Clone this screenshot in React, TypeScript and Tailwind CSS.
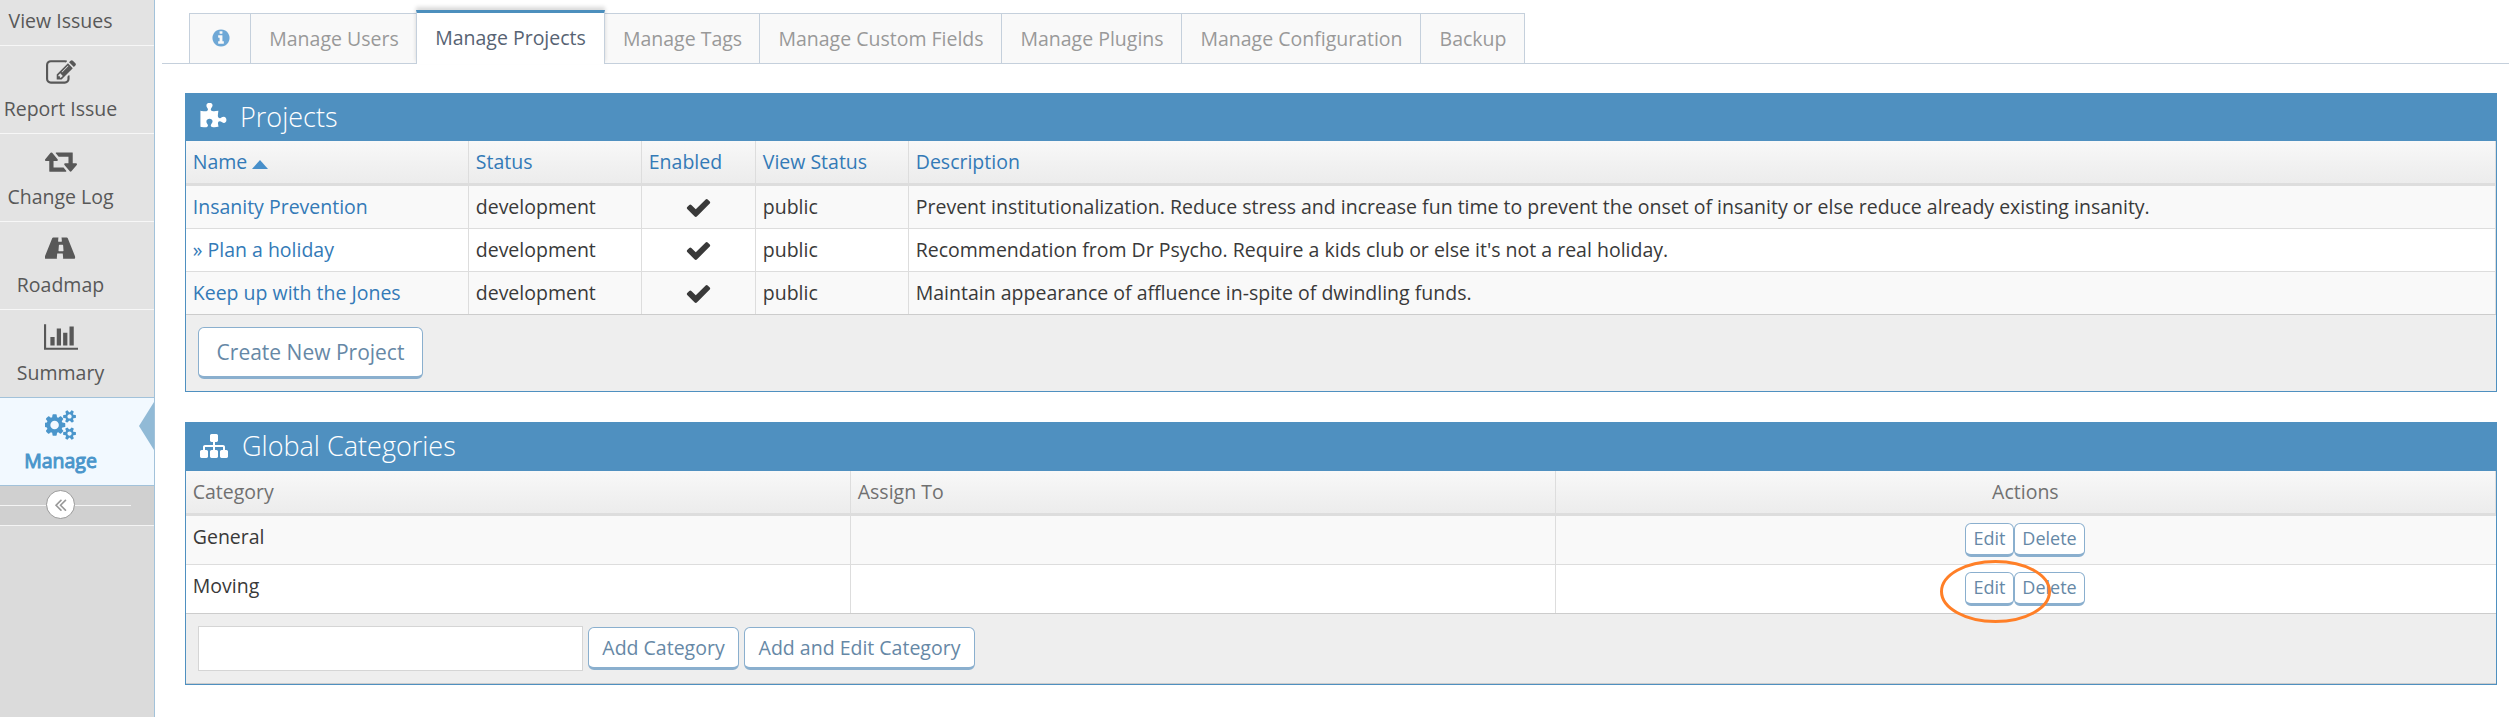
import type { ReactNode } from "react";

const icons = {
  edit: "M888 1184l116-116-152-152-116 116v56h96v96h56zm440-720q-16-16-33 1l-350 350q-17 17-1 33t33-1l350-350q17-17 1-33zm80 594v190q0 119-84.5 203.5t-203.5 84.5h-832q-119 0-203.5-84.5t-84.5-203.5v-832q0-119 84.5-203.5t203.5-84.5h832q63 0 117 25 15 7 18 23 3 17-9 29l-49 49q-14 14-32 8-23-6-45-6h-832q-66 0-113 47t-47 113v832q0 66 47 113t113 47h832q66 0 113-47t47-113v-126q0-13 9-22l64-64q15-15 35-7t20 29zm-96-738l288 288-672 672h-288v-288zm444 132l-92 92-288-288 92-92q28-28 68-28t68 28l152 152q28 28 28 68t-28 68z",
  retweet: "M1280 1504q0 13-9.5 22.5t-22.5 9.5h-960q-8 0-13.5-2t-9-7-5.5-8-3-11.5-1-11.5v-600h-192q-26 0-45-19t-19-45q0-24 15-41l320-384q19-22 49-22t49 22l320 384q15 17 15 41 0 26-19 45t-45 19h-192v384h576q16 0 25 11l160 192q7 10 7 21zm640-416q0 24-15 41l-320 384q-20 23-49 23t-49-23l-320-384q-15-17-15-41 0-26 19-45t45-19h192v-384h-576q-16 0-25-12l-160-192q-7-9-7-20 0-13 9.5-22.5t22.5-9.5h960q8 0 13.5 2t9 7 5.5 8 3 11.5 1 11.5v600h192q26 0 45 19t19 45z",
  road: "M1111 1001v-4l-24-320q-1-13-11-22.5t-23-9.5h-186q-13 0-23 9.5t-11 22.5l-24 320v4q-1 12 8 20t21 8h244q12 0 21-8t8-20zm698 407q0 73-46 73h-704q13 0 22-9.5t8-22.5l-20-256q-1-13-11-22.5t-23-9.5h-272q-13 0-23 9.5t-11 22.5l-20 256q-1 13 8 22.5t22 9.5h-704q-46 0-46-73 0-54 26-116l417-1044q8-19 26-33t38-14h339q-13 0-23 9.5t-11 22.5l-15 192q-1 14 8 23t22 9h166q13 0 22-9t8-23l-15-192q-1-13-11-22.5t-23-9.5h339q20 0 38 14t26 33l417 1044q26 62 26 116z",
  chart: "M640 896v512h-256v-512h256zm384-512v1024h-256v-1024h256zm1024 1152v128h-2048v-1536h128v1408h1920zm-640-896v768h-256v-768h256zm384-384v1152h-256v-1152h256z",
  cogs: "M832 896q0-106-75-181t-181-75-181 75-75 181 75 181 181 75 181-75 75-181zm768 512q0-52-38-90t-90-38-90 38-38 90q0 53 37.5 90.5t90.5 37.5 90.5-37.5 37.5-90.5zm0-1024q0-52-38-90t-90-38-90 38-38 90q0 53 37.5 90.5t90.5 37.5 90.5-37.5 37.5-90.5zm-384 421v185q0 10-7 19.5t-16 10.5l-155 24q-11 35-32 76 34 48 90 115 7 11 7 20 0 12-7 19-23 30-82.5 89.5t-78.5 59.5q-11 0-21-7l-115-90q-37 19-77 31-11 108-23 155-7 24-30 24h-186q-11 0-20-7.5t-10-17.5l-23-153q-34-10-75-31l-118 89q-7 7-20 7-11 0-21-8-144-133-144-160 0-9 7-19 10-14 41-53t47-61q-23-44-35-82l-152-24q-10-1-17-9.5t-7-19.5v-185q0-10 7-19.5t16-10.5l155-24q11-35 32-76-34-48-90-115-7-11-7-20 0-12 7-20 22-30 82-89t79-59q11 0 21 7l115 90q34-18 77-32 11-108 23-154 7-24 30-24h186q11 0 20 7.5t10 17.5l23 153q34 10 75 31l118-89q8-7 20-7 11 0 21 8 144 133 144 160 0 8-7 19-12 16-42 54t-45 60q23 48 34 82l152 23q10 2 17 10.5t7 19.5zm640 533v140q0 16-149 31-12 27-30 52 51 113 51 138 0 4-4 7-122 71-124 71-8 0-46-47t-52-68q-20 2-30 2t-30-2q-14 21-52 68t-46 47q-2 0-124-71-4-3-4-7 0-25 51-138-18-25-30-52-149-15-149-31v-140q0-16 149-31 13-29 30-52-51-113-51-138 0-4 4-7 4-2 35-20t59-34 30-16q8 0 46 46.5t52 67.5q20-2 30-2t30 2q51-71 92-112l6-2q4 0 124 70 4 3 4 7 0 25-51 138 17 23 30 52 149 15 149 31zm0-1024v140q0 16-149 31-12 27-30 52 51 113 51 138 0 4-4 7-122 71-124 71-8 0-46-47t-52-68q-20 2-30 2t-30-2q-14 21-52 68t-46 47q-2 0-124-71-4-3-4-7 0-25 51-138-18-25-30-52-149-15-149-31v-140q0-16 149-31 13-29 30-52-51-113-51-138 0-4 4-7 4-2 35-20t59-34 30-16q8 0 46 46.5t52 67.5q20-2 30-2t30 2q51-71 92-112l6-2q4 0 124 70 4 3 4 7 0 25-51 138 17 23 30 52 149 15 149 31z",
  puzzle: "M1755 1083q0 81-44.5 135t-123.5 54q-41 0-77.5-17.5t-59-38-56.5-38-71-17.5q-110 0-110 124 0 39 16 115t15 115v5q-22 0-33 1-34 3-97.5 11.5t-115.5 13.5-98 5q-61 0-103-26.5t-42-83.5q0-37 17.5-71t38-56.5 38-59 17.5-77.5q0-79-54-123.5t-135-44.5q-84 0-143 45.5t-59 127.5q0 43 15 83t33.5 64.5 33.5 53 15 50.5q0 45-46 89-37 35-117 35-95 0-245-24-9-2-27.5-4t-27.5-4l-13-2q-1 0-3-1-2 0-2-1v-1024q2 1 17.5 3.5t34 5 21.5 3.5q150 24 245 24 80 0 117-35 46-44 46-89 0-22-15-50.5t-33.5-53-33.5-64.5-15-83q0-82 59-127.5t144-45.5q80 0 134 44.5t54 123.5q0 41-17.5 77.5t-38 59-38 56.5-17.5 71q0 57 42 83.5t103 26.5q64 0 180-15t163-17v2q-1 2-3.5 17.5t-5 34-3.5 21.5q-24 150-24 245 0 80 35 117 44 46 89 46 22 0 50.5-15t53-33.5 64.5-33.5 83-15q82 0 127.5 59t45.5 143z",
  sitemap: "M1792 1248v320q0 40-28 68t-68 28h-320q-40 0-68-28t-28-68v-320q0-40 28-68t68-28h96v-192h-512v192h96q40 0 68 28t28 68v320q0 40-28 68t-68 28h-320q-40 0-68-28t-28-68v-320q0-40 28-68t68-28h96v-192h-512v192h96q40 0 68 28t28 68v320q0 40-28 68t-68 28h-320q-40 0-68-28t-28-68v-320q0-40 28-68t68-28h96v-192q0-52 38-90t90-38h512v-192h-96q-40 0-68-28t-28-68v-320q0-40 28-68t68-28h320q40 0 68 28t28 68v320q0 40-28 68t-68 28h-96v192h512q52 0 90 38t38 90v192h96q40 0 68 28t28 68z",
  check: "M1671 566q0 40-28 68l-724 724-136 136q-28 28-68 28t-68-28l-136-136-362-362q-28-28-28-68t28-68l136-136q28-28 68-28t68 28l294 295 656-657q28-28 68-28t68 28l136 136q28 28 28 68z",
  info: "M1152 1376v-160q0-14-9-23t-23-9h-96v-512q0-14-9-23t-23-9h-320q-14 0-23 9t-9 23v160q0 14 9 23t23 9h96v320h-96q-14 0-23 9t-9 23v160q0 14 9 23t23 9h448q14 0 23-9t9-23zm-128-896v-160q0-14-9-23t-23-9h-192q-14 0-23 9t-9 23v160q0 14 9 23t23 9h192q14 0 23-9t9-23zm640 416q0 209-103 385.5t-279.5 279.5-385.5 103-385.5-103-279.5-279.5-103-385.5 103-385.5 279.5-279.5 385.5-103 385.5 103 279.5 279.5 103 385.5z",
  collapse: "M1011 1376q0 13-10 23l-50 50q-10 10-23 10t-23-10l-466-466q-10-10-10-23t10-23l466-466q10-10 23-10t23 10l50 50q10 10 10 23t-10 23l-393 393 393 393q10 10 10 23zm384 0q0 13-10 23l-50 50q-10 10-23 10t-23-10l-466-466q-10-10-10-23t10-23l466-466q10-10 23-10t23 10l50 50q10 10 10 23t-10 23l-393 393 393 393q10 10 10 23z",
};

function Icon({ name, width = 1792, className }: { name: keyof typeof icons; width?: number; className: string }) {
  return (
    <svg viewBox={`0 0 ${width} 1792`} className={className} fill="currentColor" aria-hidden="true">
      <path d={icons[name]} />
    </svg>
  );
}

function SideItem({ icon, label, active }: { icon?: ReactNode; label: string; active?: boolean }) {
  return (
    <li
      className={
        active
          ? "relative flex h-[88px] flex-col items-center border-b border-[#a2c2da] bg-[#f2f9ff] pt-[12px] pr-[33px] text-[#4b96cb]"
          : "flex h-[88px] flex-col items-center border-b border-[#f7f7f7] bg-[#e3e3e3] pt-[12px] pr-[33px] text-[#585858] nth-[5]:border-[#a2c2da]"
      }
    >
      <div className="flex h-[30px] items-center">{icon}</div>
      <span className={active ? "mt-[7px] text-[19.5px] leading-[28px] [-webkit-text-stroke:1px_#4b96cb]" : "mt-[7px] text-[19.5px] leading-[28px]"}>{label}</span>
      {active && (
        <svg viewBox="0 0 15 48" className="absolute top-[4px] right-0 h-[48px] w-[15px]" aria-hidden="true">
          <path d="M15 0L0 24L15 48Z" fill="#91bad6" />
        </svg>
      )}
    </li>
  );
}

function Tab({ children, className }: { children: ReactNode; className: string }) {
  return (
    <li className={`flex h-[51px] items-center justify-center border-y border-[#c5d0dc] bg-[#f9f9f9] pl-px text-[#999] ${className}`}>
      {children}
    </li>
  );
}

function Button({ children, className }: { children: ReactNode; className: string }) {
  return (
    <button className={`flex items-center justify-center rounded-[6px] border border-b-[3px] border-[#8aafce] bg-white text-[#6688a6] ${className}`}>
      {children}
    </button>
  );
}

const projects = [
  ["Insanity Prevention", "Prevent institutionalization. Reduce stress and increase fun time to prevent the onset of insanity or else reduce already existing insanity."],
  ["» Plan a holiday", "Recommendation from Dr Psycho. Require a kids club or else it's not a real holiday."],
  ["Keep up with the Jones", "Maintain appearance of affluence in-spite of dwindling funds."],
];

const projectCols = "grid grid-cols-[283px_173px_114px_153px_1fr]";
const categoryCols = "grid grid-cols-[665px_705px_1fr]";
const cell = "flex items-center border-r border-[#ddd] pr-[7px] pl-[6.75px]";
const head = "h-[45px] border-b-[3px] border-[#ddd] bg-linear-to-b from-[#f8f8f8] to-[#ececec]";

export default function App() {
  return (
    <div className="flex h-[717px] w-[2509px] overflow-hidden bg-white font-['Open_Sans',sans-serif] text-[19.5px] leading-[28px] text-[#393939]">
      <aside className="w-[155px] shrink-0 border-r border-[#a2c2da] bg-[#dbdbdb]">
        <ul className="-mt-[42px]">
          <SideItem label="View Issues" />
          <SideItem label="Report Issue" icon={<Icon name="edit" className="h-[30px] w-[30px]" />} />
          <SideItem label="Change Log" icon={<Icon name="retweet" width={1920} className="h-[30px] w-[32px]" />} />
          <SideItem label="Roadmap" icon={<Icon name="road" width={1920} className="h-[30px] w-[32px]" />} />
          <SideItem label="Summary" icon={<Icon name="chart" width={2048} className="h-[30px] w-[34px]" />} />
          <SideItem label="Manage" active icon={<Icon name="cogs" width={1920} className="h-[30px] w-[32px]" />} />
        </ul>
        <div className="flex h-[40px] items-center border-b border-[#f4f4f4] bg-[#d0d0d0]">
          <div className="h-px w-[46px] bg-[#f4f4f4]" />
          <div className="-mt-[2px] flex size-[29px] items-center justify-center rounded-full border border-[#999] bg-white text-[#999]">
            <Icon name="collapse" className="size-[21px]" />
          </div>
          <div className="h-px w-[56px] bg-[#f4f4f4]" />
        </div>
      </aside>

      <main className="flex min-w-0 flex-1 flex-col">
        <nav className="ml-[7px] flex h-[64px] items-end border-b border-[#c5d0dc] pl-[27px]">
          <ul className="-mb-px flex items-end">
            <Tab className="w-[62px] border-x">
              <Icon name="info" className="mt-[-2px] size-[20px] text-[#6fa8d6]" />
            </Tab>
            <Tab className="w-[165px]">Manage Users</Tab>
            <li className="z-10 flex h-[54px] w-[189px] items-center justify-center border-x border-t-[3px] border-x-[#c5d0dc] border-t-[#4c8fbd] bg-white pb-px text-[#576373] shadow-[0_-3px_4px_0_rgba(0,0,0,0.15)]">
              Manage Projects
            </li>
            <Tab className="w-[155px] border-r">Manage Tags</Tab>
            <Tab className="w-[242px] border-r">Manage Custom Fields</Tab>
            <Tab className="w-[180px] border-r">Manage Plugins</Tab>
            <Tab className="w-[239px] border-r">Manage Configuration</Tab>
            <Tab className="w-[104px] border-r">Backup</Tab>
          </ul>
        </nav>

        <section className="mt-[29px] ml-[30px] h-[299px] w-[2312px] border border-t-0 border-[#4f90c0]">
          <h4 className="flex h-[48px] items-center bg-[#4f90c0] pb-px pl-[13px] text-[27px] font-light text-white">
            <Icon name="puzzle" className="mr-[13px] size-[28px]" />
            Projects
          </h4>
          <div className={`${projectCols} ${head} text-[#337ab7]`}>
            <div className={cell}>
              Name
              <svg viewBox="0 0 16 9" className="mt-[4px] ml-[5px] h-[9px] w-[16px]" aria-hidden="true">
                <path d="M8 0L16 9H0Z" fill="#478fca" />
              </svg>
            </div>
            <div className={cell}>Status</div>
            <div className={cell}>Enabled</div>
            <div className={cell}>View Status</div>
            <div className={cell}>Description</div>
          </div>
          {projects.map(([name, text]) => (
            <div key={name} className={`${projectCols} h-[43px] border-b border-[#ddd] nth-[3]:bg-[#f9f9f9] nth-[5]:border-[#ccc] nth-[5]:bg-[#f9f9f9]`}>
              <div className={`${cell} text-[#337ab7]`}>{name}</div>
              <div className={cell}>development</div>
              <div className={`${cell} justify-center`}>
                <Icon name="check" className="size-[27px]" />
              </div>
              <div className={cell}>public</div>
              <div className={cell}>{text}</div>
            </div>
          ))}
          <div className="h-[76px] bg-[#eee] pt-[12px] pl-[12px]">
            <Button className="h-[52px] w-[225px] text-[21px]">Create New Project</Button>
          </div>
        </section>

        <section className="mt-[30px] ml-[30px] h-[263px] w-[2312px] border border-t-0 border-[#4f90c0]">
          <h4 className="flex h-[49px] items-center bg-[#4f90c0] pb-[2px] pl-[14px] text-[27px] font-light text-white">
            <Icon name="sitemap" className="mr-[14px] size-[28px]" />
            Global Categories
          </h4>
          <div className={`${categoryCols} ${head} text-[#707070]`}>
            <div className={cell}>Category</div>
            <div className={cell}>Assign To</div>
            <div className={`${cell} justify-center`}>Actions</div>
          </div>
          {["General", "Moving"].map((name) => (
            <div key={name} className={`${categoryCols} h-[49px] border-b border-[#ddd] nth-[3]:bg-[#f9f9f9] nth-[4]:border-[#ccc]`}>
              <div className={`${cell} pb-[7px]`}>{name}</div>
              <div className={cell} />
              <div className="relative flex items-start justify-center pt-[7px] pr-[2px]">
                <Button className="h-[34px] w-[49px] pb-[2px] text-[18px]">Edit</Button>
                <Button className="h-[34px] w-[71px] pb-[2px] text-[18px]">Delete</Button>
                {name === "Moving" && (
                  <svg viewBox="0 0 112 64" className="absolute top-[-5px] left-[384px] h-[64px] w-[112px]" aria-hidden="true">
                    <ellipse cx="55.5" cy="31.5" rx="54" ry="30" fill="none" stroke="#ff7f27" strokeWidth="3" />
                  </svg>
                )}
              </div>
            </div>
          ))}
          <div className="flex h-[70px] items-start border-b border-[#ccc] bg-[#eee] pt-[12px] pl-[12px]">
            <input className="h-[45px] w-[385px] border border-[#d5d5d5] bg-white" />
            <Button className="mt-px ml-[5px] h-[43px] w-[151px]">Add Category</Button>
            <Button className="mt-px ml-[5px] h-[43px] w-[231px]">Add and Edit Category</Button>
          </div>
        </section>
      </main>
    </div>
  );
}
